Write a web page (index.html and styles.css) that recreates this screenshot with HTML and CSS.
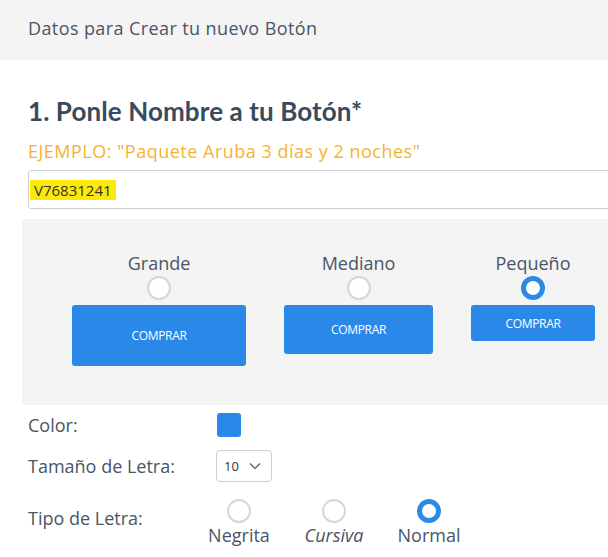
FILE: index.html
```html
<!DOCTYPE html>
<html lang="es">
<head>
<meta charset="utf-8">
<title>Datos para Crear tu nuevo Botón</title>
<link rel="stylesheet" href="styles.css">
</head>
<body>
<header class="top-bar">Datos para Crear tu nuevo Botón</header>
<main class="content">
  <h1 class="title">1. Ponle Nombre a tu Botón*</h1>
  <p class="example">EJEMPLO: "Paquete Aruba 3 días y 2 noches"</p>
  <div class="name-input"><span class="highlight">V76831241</span></div>

  <section class="size-panel">
    <div class="size-col">
      <span class="size-label">Grande</span>
      <span class="radio"></span>
      <span class="btn btn-lg">COMPRAR</span>
    </div>
    <div class="size-col">
      <span class="size-label">Mediano</span>
      <span class="radio"></span>
      <span class="btn btn-md">COMPRAR</span>
    </div>
    <div class="size-col">
      <span class="size-label">Pequeño</span>
      <span class="radio radio-on"></span>
      <span class="btn btn-sm">COMPRAR</span>
    </div>
  </section>

  <div class="opt-row row-color">
    <span class="opt-label">Color:</span>
    <span class="swatch"></span>
  </div>
  <div class="opt-row row-size">
    <span class="opt-label">Tamaño de Letra:</span>
    <span class="select">10
      <svg class="chev" width="12" height="8" viewBox="0 0 12 8"><path d="M1 1.5 L6 6.5 L11 1.5" fill="none" stroke="#555" stroke-width="1.2"/></svg>
    </span>
  </div>
  <div class="opt-row row-type">
    <span class="opt-label">Tipo de Letra:</span>
    <div class="type-opts">
      <div class="type-opt"><span class="radio"></span><span>Negrita</span></div>
      <div class="type-opt"><span class="radio"></span><span class="ital">Cursiva</span></div>
      <div class="type-opt"><span class="radio radio-on"></span><span>Normal</span></div>
    </div>
  </div>
</main>
</body>
</html>
```

FILE: styles.css
```css
* { box-sizing: border-box; }
html, body { margin: 0; padding: 0; background: #fff; overflow: hidden; }
body {
  font-family: "Open Sans", "Noto Sans", sans-serif;
  color: #4b5563;
  width: 608px;
  height: 557px;
}
.top-bar {
  height: 60px;
  background: #f4f4f4;
  display: flex;
  align-items: center;
  padding: 0 0 4px 28px;
  font-size: 18px;
  letter-spacing: 0.4px;
  color: #4a5566;
}
.content { padding-left: 28px; }
.title {
  margin: 33px 0 0 0;
  font-family: "Lato", "Open Sans", sans-serif;
  font-size: 26px;
  line-height: 36px;
  font-weight: 700;
  letter-spacing: 0.1px;
  color: #3a4a5d;
}
.example {
  margin: 10px 0 0 0;
  font-size: 18px;
  line-height: 24px;
  letter-spacing: 0.5px;
  color: #f5b32f;
}
.name-input {
  margin-top: 7px;
  width: 620px;
  height: 39px;
  border: 1px solid #cfcfcf;
  border-radius: 3px;
  display: flex;
  align-items: center;
  padding-left: 1px;
  font-size: 15px;
  color: #333;
}
.highlight {
  background: #fce80a;
  padding: 0 4px;
  line-height: 20px;
}
.size-panel {
  margin: 10px 0 0 -6px;
  height: 186px;
  background: #f4f4f4;
  display: flex;
  align-items: flex-start;
  gap: 38px;
  padding: 31px 0 0 50px;
}
.size-col {
  display: flex;
  flex-direction: column;
  align-items: center;
}
.size-label {
  font-size: 18px;
  line-height: 26px;
  color: #4a5566;
}
.radio {
  width: 24px;
  height: 24px;
  border-radius: 50%;
  border: 2px solid #d6d6d6;
  background: #fff;
  display: block;
}
.radio-on {
  border: 5px solid #2b8ae6;
}
.size-col .radio { margin-bottom: 5px; }
.btn {
  display: flex;
  align-items: center;
  justify-content: center;
  background: #2a88e8;
  color: #fff;
  border-radius: 3px;
  font-size: 12px;
  letter-spacing: -0.3px;
}
.btn-lg { width: 174px; height: 61px; }
.btn-md { width: 149px; height: 49px; }
.btn-sm { width: 124px; height: 36px; }

.opt-row {
  display: flex;
  align-items: center;
}
.opt-label {
  width: 189px;
  font-size: 18px;
  color: #4a5566;
}
.row-color { margin-top: 8px; height: 24px; }
.swatch {
  width: 24px;
  height: 24px;
  border-radius: 3px;
  background: #2a88e8;
}
.row-size { margin-top: 13px; height: 32px; }
.select {
  width: 56px;
  height: 32px;
  border: 1px solid #cfcfcf;
  border-radius: 4px;
  display: flex;
  align-items: center;
  justify-content: space-between;
  padding: 0 10px 0 7px;
  font-size: 13px;
  color: #333;
  margin-left: -1px;
}
.row-type { margin-top: 17px; align-items: flex-start; }
.row-type .opt-label { margin-top: 7px; }
.type-opts {
  display: flex;
  gap: 31px;
  margin-left: -10px;
}
.type-opt {
  width: 64px;
  display: flex;
  flex-direction: column;
  align-items: center;
  font-size: 18px;
  line-height: 24px;
  color: #4a5566;
}
.ital { font-style: italic; }
```
